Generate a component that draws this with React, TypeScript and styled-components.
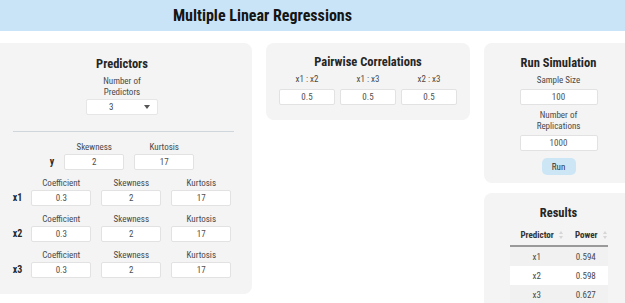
import React from "react";
import styled, { createGlobalStyle } from "styled-components";

const Global = createGlobalStyle`
  html, body {
    margin: 0;
    padding: 0;
    overflow: hidden;
    background: #fff;
  }
  body {
    font-family: "Liberation Sans Narrow", "Roboto Condensed", Roboto, sans-serif;
    color: #222;
  }
`;

const Header = styled.header`
  height: 31px;
  background: #c9e4f6;
  display: flex;
  align-items: center;
  justify-content: center;
  padding-right: 100px;
  box-sizing: border-box;
`;
const HeaderTitle = styled.h1`
  margin: 0;
  font-size: 16px;
  font-weight: 700;
  color: #151515;
`;
const Main = styled.main`
  display: flex;
  justify-content: center;
  align-items: flex-start;
  gap: 14px;
  padding-top: 12px;
`;
const Column = styled.div<{ $w: number }>`
  flex: 0 0 ${(p) => p.$w}px;
  display: flex;
  flex-direction: column;
  gap: 10px;
`;
const Panel = styled.section<{ $pt: number; $pb: number }>`
  background: #f4f4f4;
  border-radius: 8px;
  box-sizing: border-box;
  padding: ${(p) => p.$pt}px 0 ${(p) => p.$pb}px;
  display: flex;
  flex-direction: column;
  align-items: center;
`;
const PanelTitle = styled.h2`
  margin: 0;
  font-size: 12.5px;
  line-height: 16px;
  font-weight: 700;
  color: #262626;
`;
const Caption = styled.div<{ $mt?: number }>`
  margin-top: ${(p) => p.$mt ?? 0}px;
  font-size: 9px;
  line-height: 11px;
  color: #4a4a4a;
  text-align: center;
`;
const Input = styled.div<{ $w: number; $mt?: number }>`
  width: ${(p) => p.$w}px;
  height: 16px;
  margin-top: ${(p) => p.$mt ?? 0}px;
  box-sizing: border-box;
  background: #fff;
  border: 1px solid #e2e2e2;
  border-radius: 2px;
  font-size: 9px;
  line-height: 14px;
  color: #505050;
  text-align: center;
`;
const SelectBox = styled.div`
  margin-top: 1px;
  width: 72px;
  height: 16px;
  box-sizing: border-box;
  background: #fff;
  border: 1px solid #e6e6e6;
  border-radius: 2px;
  display: flex;
  align-items: center;
  justify-content: space-between;
  padding: 0 7px 0 22px;
  font-size: 9px;
  color: #444;
`;
const Divider = styled.hr`
  align-self: stretch;
  margin: 16px 18px 10px 21px;
  border: none;
  border-top: 1px solid #cfd6dc;
`;
const Rows = styled.div`
  display: flex;
  flex-direction: column;
  gap: 8px;
`;
const FieldRow = styled.div<{ $gap: number }>`
  display: flex;
  align-items: flex-end;
  justify-content: center;
  gap: ${(p) => p.$gap}px;
`;
const RowLabel = styled.div`
  height: 16px;
  line-height: 16px;
  font-size: 10px;
  font-weight: 700;
  color: #2a2a2a;
`;
const Fields = styled.div<{ $gap: number; $mt?: number }>`
  display: flex;
  gap: ${(p) => p.$gap}px;
  margin-top: ${(p) => p.$mt ?? 0}px;
`;
const Field = styled.div<{ $gap?: number }>`
  display: flex;
  flex-direction: column;
  align-items: center;
  gap: ${(p) => p.$gap ?? 1}px;
`;
const RunButton = styled.button`
  margin-top: 7px;
  width: 34px;
  height: 17px;
  padding: 0;
  border: none;
  border-radius: 5px;
  background: #cde6f6;
  font-family: inherit;
  font-size: 9px;
  color: #333;
`;
const Table = styled.table`
  margin-top: 4px;
  width: 98px;
  border-collapse: collapse;
  font-size: 9px;
  color: #4a4a4a;
  border-bottom: 1px solid #999;
`;
const Th = styled.th`
  height: 20px;
  padding: 0 0 0 11px;
  text-align: left;
  font-weight: 700;
  color: #333;
  border-bottom: 2px solid #9a9a9a;
  white-space: nowrap;
`;
const Tr = styled.tr<{ $odd: boolean }>`
  background: ${(p) => (p.$odd ? "#f1f1f1" : "#fff")};
`;
const Td = styled.td`
  height: 19px;
  padding: 0;
  text-align: center;
`;
const Sort = styled.svg`
  margin-left: 5px;
  vertical-align: -1px;
`;

const SortIcon = () => (
  <Sort width="4" height="8" viewBox="0 0 4 8">
    <path d="M2 0 L4 3 L0 3 Z M2 8 L4 5 L0 5 Z" fill="#d6d6d6" />
  </Sort>
);

const predictorRows = ["x1", "x2", "x3"];
const correlations = ["x1 : x2", "x1 : x3", "x2 : x3"];
const results = [
  { name: "x1", power: "0.594" },
  { name: "x2", power: "0.598" },
  { name: "x3", power: "0.627" },
];

const App: React.FC = () => {
  return (
    <>
      <Global />
      <Header>
        <HeaderTitle>Multiple Linear Regressions</HeaderTitle>
      </Header>
      <Main>
        <Column $w={260}>
          <Panel $pt={13} $pb={16}>
            <PanelTitle>Predictors</PanelTitle>
            <Caption $mt={4}>
              Number of
              <br />
              Predictors
            </Caption>
            <SelectBox>
              <span>3</span>
              <svg width="6" height="4" viewBox="0 0 6 4">
                <path d="M0 0 L6 0 L3 4 Z" fill="#555" />
              </svg>
            </SelectBox>
            <Divider />
            <Rows>
              <FieldRow $gap={10}>
                <RowLabel>y</RowLabel>
                <Fields $gap={10}>
                  <Field>
                    <Caption>Skewness</Caption>
                    <Input $w={60}>2</Input>
                  </Field>
                  <Field>
                    <Caption>Kurtosis</Caption>
                    <Input $w={60}>17</Input>
                  </Field>
                </Fields>
              </FieldRow>
              {predictorRows.map((x) => (
                <FieldRow $gap={9} key={x}>
                  <RowLabel>{x}</RowLabel>
                  <Fields $gap={10}>
                    <Field>
                      <Caption>Coefficient</Caption>
                      <Input $w={60}>0.3</Input>
                    </Field>
                    <Field>
                      <Caption>Skewness</Caption>
                      <Input $w={60}>2</Input>
                    </Field>
                    <Field>
                      <Caption>Kurtosis</Caption>
                      <Input $w={60}>17</Input>
                    </Field>
                  </Fields>
                </FieldRow>
              ))}
            </Rows>
          </Panel>
        </Column>

        <Column $w={204}>
          <Panel $pt={11} $pb={15}>
            <PanelTitle>Pairwise Correlations</PanelTitle>
            <Fields $gap={5} $mt={4}>
              {correlations.map((c) => (
                <Field key={c} $gap={4}>
                  <Caption>{c}</Caption>
                  <Input $w={56}>0.5</Input>
                </Field>
              ))}
            </Fields>
          </Panel>
        </Column>

        <Column $w={149}>
          <Panel $pt={12} $pb={8}>
            <PanelTitle>Run Simulation</PanelTitle>
            <Caption $mt={4}>Sample Size</Caption>
            <Input $w={78} $mt={3}>
              100
            </Input>
            <Caption $mt={5}>
              Number of
              <br />
              Replications
            </Caption>
            <Input $w={78} $mt={3}>
              1000
            </Input>
            <RunButton>Run</RunButton>
          </Panel>
          <Panel $pt={12} $pb={20}>
            <PanelTitle>Results</PanelTitle>
            <Table>
              <thead>
                <tr>
                  <Th>
                    Predictor
                    <SortIcon />
                  </Th>
                  <Th>
                    Power
                    <SortIcon />
                  </Th>
                </tr>
              </thead>
              <tbody>
                {results.map((r, i) => (
                  <Tr $odd={i % 2 === 0} key={r.name}>
                    <Td>{r.name}</Td>
                    <Td>{r.power}</Td>
                  </Tr>
                ))}
              </tbody>
            </Table>
          </Panel>
        </Column>
      </Main>
    </>
  );
};

export default App;
